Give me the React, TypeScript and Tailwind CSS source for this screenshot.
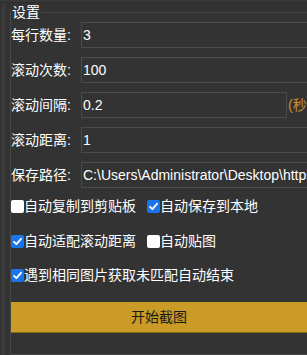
import React from "react";

const font = { fontFamily: '"Liberation Sans", "Noto Sans CJK SC", sans-serif' };

function Box({ checked }: { checked: boolean }) {
  if (checked) {
    return (
      <span className="flex h-[13px] w-[13px] shrink-0 items-center justify-center rounded-[2px] bg-[#1a74ec]">
        <svg width="11" height="11" viewBox="0 0 11 11">
          <path d="M2 5.8 L4.4 8.2 L9 2.8" fill="none" stroke="#fff" strokeWidth="1.8" strokeLinecap="round" strokeLinejoin="round" />
        </svg>
      </span>
    );
  }
  return <span className="h-[13px] w-[13px] shrink-0 rounded-[2px] bg-white" />;
}

function Check({ checked, label }: { checked: boolean; label: string }) {
  return (
    <label className="flex items-center">
      <Box checked={checked} />
      <span className="whitespace-nowrap text-[14px] leading-[20px] text-white">{label}</span>
    </label>
  );
}

function Field({ label, value, suffix }: { label: string; value: string; suffix?: string }) {
  return (
    <div className="flex h-[26px] items-center">
      <span className="w-[70px] shrink-0 whitespace-nowrap text-[14px] leading-[20px] text-white">{label}</span>
      <div
        className={
          "flex h-[26px] shrink-0 items-center overflow-hidden border border-[#4b4b4b] bg-[#333333] pl-[1px] " +
          (suffix ? "w-[206px]" : "w-[260px]")
        }
      >
        <span className="whitespace-nowrap text-[14px] text-white">{value}</span>
      </div>
      {suffix && <span className="ml-[1px] whitespace-nowrap text-[14px] text-[#c9922a]">{suffix}</span>}
    </div>
  );
}

export default function App() {
  return (
    <div className="h-[355px] w-[307px] overflow-hidden bg-[#333333]" style={font}>
      <div className="h-[2px] bg-[#383838]" />
      <div className="h-[1px] bg-[#2c2c2c]" />
      <div className="flex">
        <div className="w-[2px] shrink-0" />
        <div className="h-[352px] w-[3px] shrink-0 bg-[#3b3b3b]" />
        <div className="w-[5px] shrink-0" />
        <fieldset className="w-[320px] shrink-0 border-l border-t border-b border-[#474747] pb-0">
          <legend className="px-[1px] text-[14px] leading-[18px] text-white">设置</legend>
          <div className="mt-[1px] flex flex-col gap-[9px]">
            <Field label="每行数量:" value="3" />
            <Field label="滚动次数:" value="100" />
            <Field label="滚动间隔:" value="0.2" suffix="(秒)" />
            <Field label="滚动距离:" value="1" />
            <Field label="保存路径:" value="C:\Users\Administrator\Desktop\https" />
          </div>
          <div className="mt-[8px] flex h-[20px] items-center">
            <div className="w-[136px] shrink-0">
              <Check checked={false} label="自动复制到剪贴板" />
            </div>
            <Check checked={true} label="自动保存到本地" />
          </div>
          <div className="mt-[15px] flex h-[20px] items-center">
            <div className="w-[136px] shrink-0">
              <Check checked={true} label="自动适配滚动距离" />
            </div>
            <Check checked={false} label="自动贴图" />
          </div>
          <div className="mt-[14px] flex h-[20px] items-center">
            <Check checked={true} label="遇到相同图片获取未匹配自动结束" />
          </div>
          <button className="mt-[17px] flex h-[31px] w-[296px] items-center justify-center border-b border-[#8a6818] bg-[#ca9b27] text-[14px] text-[#1a1a1a]">
            开始截图
          </button>
        </fieldset>
      </div>
    </div>
  );
}
